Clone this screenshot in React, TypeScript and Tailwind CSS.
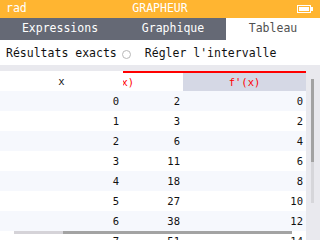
import React from "react";

const rows = [0, 1, 2, 3, 4, 5, 6, 7].map((x) => ({
  x,
  fx: x * x + 2,
  dfx: 2 * x,
}));

const Battery = () => (
  <svg width="17" height="8" viewBox="0 0 17 8">
    <rect x="0.5" y="0.5" width="13" height="7" fill="none" stroke="#fff" />
    <rect x="2" y="2" width="10" height="4" fill="#fff" />
    <rect x="14" y="2" width="2" height="4" fill="#fff" />
  </svg>
);

const App = () => {
  return (
    <div className="relative w-[320px] h-[240px] overflow-hidden bg-white font-['DejaVu_Sans_Mono',monospace]">
      {/* status bar */}
      <div className="flex items-center justify-between h-[18px] bg-[#ffb531] px-[6px] text-[11.5px] leading-none text-white">
        <span className="w-[40px]">rad</span>
        <span>GRAPHEUR</span>
        <span className="w-[40px] flex justify-end pr-[-2px]">
          <Battery />
        </span>
      </div>

      {/* tabs */}
      <div className="flex h-[22px] bg-[#656975] text-[11.5px] leading-none">
        <div className="w-[120px] flex items-center justify-center text-white">
          Expressions
        </div>
        <div className="w-[106px] flex items-center justify-center text-white">
          Graphique
        </div>
        <div className="w-[94px] flex items-center justify-center bg-white text-[#505050]">
          Tableau
        </div>
      </div>

      {/* options */}
      <div className="flex items-center h-[25px] pl-[6px] pt-[3px] text-[11.5px] leading-none text-[#111]">
        <span>Résultats exacts</span>
        <span className="ml-[5px] w-[9px] h-[9px] rounded-full border border-[#b8b8b8]" />
        <span className="ml-[14px]">Régler l'intervalle</span>
      </div>

      {/* table area */}
      <div className="h-[175px] bg-[#e9e9ee] pt-[6px]">
        <div className="w-[306px] text-[10.5px] leading-none text-[#111]">
          <div className="flex h-[20px]">
            <div className="w-[123px] bg-white flex items-center justify-center">x</div>
            <div className="w-[60px] overflow-hidden bg-white border-t-2 border-[#ff0000]">
              <div className="w-[123px] ml-[-63px] h-full flex items-center justify-center text-[#ff0000]">
                f(x)
              </div>
            </div>
            <div className="w-[123px] bg-[#d5d8e5] border-t-2 border-[#ff0000] flex items-center justify-center text-[#ff0000]">
              f'(x)
            </div>
          </div>
          {rows.map((r) => (
            <div
              key={r.x}
              className={
                "flex h-[20px] items-center " +
                (r.x % 2 === 0 ? "bg-[#f6f8fd]" : "bg-white")
              }
            >
              <div className="w-[123px] text-right pr-[4px]">{r.x}</div>
              <div className="w-[60px] text-right pr-[3px]">{r.fx}</div>
              <div className="w-[123px] text-right pr-[3px]">{r.dfx}</div>
            </div>
          ))}
        </div>
      </div>

      {/* scrollbars */}
      <div className="absolute left-[311px] top-[79px] w-[3px] h-[124px] bg-[#d6d6da]">
        <div className="h-[83px] bg-[#a3a3a3]" />
      </div>
      <div className="absolute left-[14px] top-[231px] w-[278px] h-[3px] bg-[#d5d3d8] flex">
        <div className="ml-[49px] flex-1 bg-[#a3a3a3]" />
      </div>
    </div>
  );
};

export default App;
